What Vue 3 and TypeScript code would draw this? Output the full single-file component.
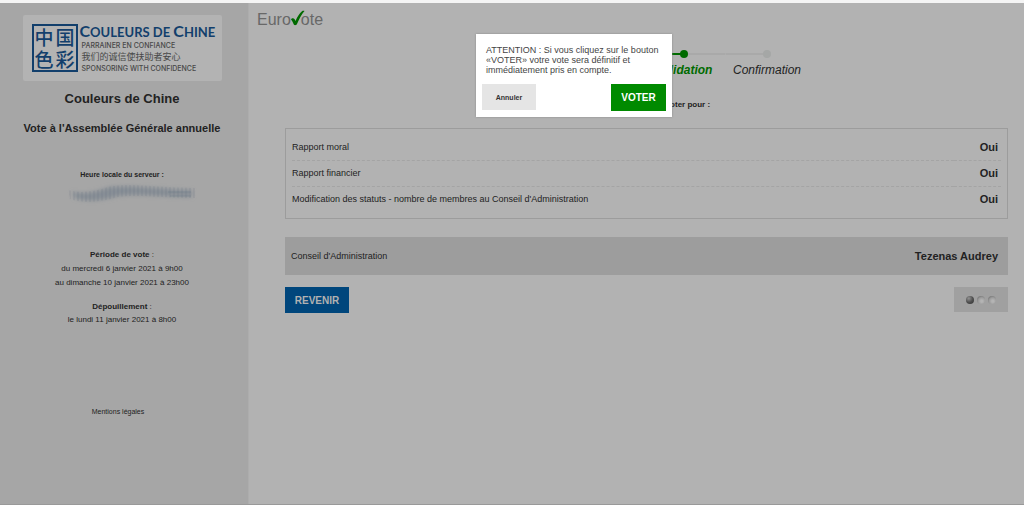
<script setup lang="ts">
interface Choice {
  label: string
  value: string
}

const resolutions: Choice[] = [
  { label: 'Rapport moral', value: 'Oui' },
  { label: 'Rapport financier', value: 'Oui' },
  { label: "Modification des statuts - nombre de membres au Conseil d'Administration", value: 'Oui' },
]

const steps = [
  { label: 'Validation', active: true },
  { label: 'Confirmation', active: false },
]

const stripes = Array.from({ length: 32 }, (_, i) => 8 + i * 4)
</script>

<template>
  <div class="page">
    <aside class="sidebar">
      <div class="logo">
        <div class="seal"><span>中</span><span>国</span><span>色</span><span>彩</span></div>
        <div class="logo-text">
          <div class="brand">C<small>OULEURS DE </small>C<small>HINE</small></div>
          <div class="tag">PARRAINER EN CONFIANCE</div>
          <div class="tag cn">我们的诚信使扶助者安心</div>
          <div class="tag">SPONSORING WITH CONFIDENCE</div>
        </div>
      </div>
      <h1>Couleurs de Chine</h1>
      <h2>Vote à l'Assemblée Générale annuelle</h2>
      <p class="clock-label">Heure locale du serveur :</p>
      <svg class="smear" width="140" height="24" viewBox="0 0 140 24" aria-hidden="true">
        <defs>
          <filter id="soft" x="-10%" y="-50%" width="120%" height="200%">
            <feGaussianBlur stdDeviation="2" />
          </filter>
          <filter id="fine" x="-10%" y="-50%" width="120%" height="200%">
            <feGaussianBlur stdDeviation="0.7" />
          </filter>
          <clipPath id="band">
            <path d="M6 8C20 12 34 9 46 5C68 0 95 6 134 6L134 16C104 16 72 12 56 15C40 20 22 22 8 17Z" />
          </clipPath>
        </defs>
        <path
          d="M10 10C26 13 34 9 48 5C72 3 96 7 130 8L130 15C104 15 74 11 56 14C40 19 24 20 13 16Z"
          fill="#7e8891"
          fill-opacity="0.8"
          filter="url(#soft)"
        />
        <g filter="url(#fine)">
          <g clip-path="url(#band)" stroke="#68747f" stroke-opacity="0.3">
            <line v-for="x in stripes" :key="x" :x1="x" :x2="x" y1="0" y2="24" />
          </g>
        </g>
        <path d="M106 10H129M108 14H129" stroke="#5e6d80" stroke-opacity="0.3" filter="url(#fine)" />
      </svg>
      <div class="dates">
        <p><b>Période de vote</b> :</p>
        <p>du mercredi 6 janvier 2021 à 9h00</p>
        <p>au dimanche 10 janvier 2021 à 23h00</p>
      </div>
      <div class="count">
        <p><b>Dépouillement</b> :</p>
        <p>le lundi 11 janvier 2021 à 8h00</p>
      </div>
      <a class="legal" href="#">Mentions légales</a>
    </aside>

    <main class="main">
      <div class="eurovote">
        <span>Euro</span>
        <svg width="15" height="16" viewBox="0 0 15 16" aria-label="V">
          <path d="M1 9.500C1.500 8 3.500 7.700 4.500 9L5.500 11C7.500 6.500 9.500 3 12 1.200C12.700 0.700 14 0.600 14.500 1C11.500 4 9 9.500 7 14C6.200 15.500 4.500 15.500 3.800 14.500C3 13 2.500 11 1 9.500Z" fill="#006a00" />
        </svg>
        <span>ote</span>
      </div>

      <div class="content">
        <ol class="steps">
          <li v-for="step in steps" :key="step.label" :class="{ active: step.active }">
            <i class="dot"></i>
            <span>{{ step.label }}</span>
          </li>
        </ol>
        <p class="intro">Vous allez voter pour :</p>

        <div class="panel">
          <table>
            <tbody>
              <tr v-for="item in resolutions" :key="item.label">
                <th scope="row">{{ item.label }}</th>
                <td>{{ item.value }}</td>
              </tr>
            </tbody>
          </table>
        </div>

        <div class="council">
          <span>Conseil d'Administration</span>
          <strong>Tezenas Audrey</strong>
        </div>

        <div class="actions">
          <button type="button" class="back">REVENIR</button>
          <div class="loader" role="status" aria-label="Chargement">
            <i class="ball on"></i><i class="ball"></i><i class="ball"></i>
          </div>
        </div>
      </div>
    </main>

    <div class="dialog" role="dialog" aria-modal="true">
      <p>ATTENTION : Si vous cliquez sur le bouton «VOTER» votre vote sera définitif et immédiatement pris en compte.</p>
      <div class="choices">
        <button type="button" class="cancel">Annuler</button>
        <button type="button" class="vote">VOTER</button>
      </div>
    </div>
  </div>
</template>

<style>
body {
  margin: 0;
  background: #b2b2b2;
}
</style>

<style scoped>
.page {
  position: relative;
  box-sizing: border-box;
  display: flex;
  min-height: 100vh;
  border-top: 3px solid #f4f4f4;
  border-bottom: 1px solid #999;
  background: #b2b2b2;
  color: #222;
  font: 8px/13px "Liberation Sans", Arial, sans-serif;
}
p, h1, h2 {
  margin: 0;
}
button {
  border: 0;
  padding: 0;
  font-family: inherit;
  font-weight: bold;
}

.sidebar {
  box-sizing: border-box;
  flex: 0 0 249px;
  display: flex;
  flex-direction: column;
  align-items: center;
  padding: 12px 4px 0 0;
  border-right: 1px solid #adadad;
  background: #a6a6a6;
  text-align: center;
}
.logo {
  box-sizing: border-box;
  display: flex;
  gap: 2px;
  width: 199px;
  height: 66px;
  padding: 9px 0 0 9px;
  border-radius: 2px;
  background: #b3b3b3;
  text-align: left;
  white-space: nowrap;
}
.seal {
  box-sizing: border-box;
  flex: none;
  display: grid;
  grid-template-columns: 21px 21px;
  grid-template-rows: 22px 22px;
  place-content: center;
  width: 46px;
  height: 48px;
  border: 2px solid #123f6c;
  color: #123f6c;
  font: 500 19px/21px "Noto Sans CJK SC", sans-serif;
  text-align: center;
}
.brand {
  height: 16px;
  color: #123f6c;
  font: bold 16px/14px Lato, sans-serif;
}
.brand small {
  font-size: 13px;
}
.tag {
  padding-left: 2px;
  color: #484848;
  font: 500 7px/11px Inter, sans-serif;
}
.tag.cn {
  font: 9px/12px "Noto Sans CJK SC", sans-serif;
}
h1 {
  margin-top: 9px;
  font-size: 13px;
  line-height: 18px;
}
h2 {
  margin-top: 12px;
  font-size: 11px;
  line-height: 16px;
}
.clock-label {
  margin-top: 32px;
  font-size: 7px;
  font-weight: bold;
}
.smear {
  margin: 1px 0 0 20px;
}
.dates {
  margin-top: 42px;
  line-height: 14px;
}
.count {
  margin-top: 10px;
}
.legal {
  margin: 79px 8px 0 0;
  color: #222;
  font-size: 7px;
  text-decoration: none;
}

.main {
  flex: 1;
  padding: 7px 16px 0 8px;
}
.eurovote {
  display: flex;
  height: 18px;
  color: #686868;
  font-size: 16px;
  line-height: 20px;
}
.eurovote svg {
  margin: 0 -4px 0 -1px;
}
.content {
  margin-left: 28px;
}
.steps {
  display: grid;
  grid-template-columns: 83px 83px;
  justify-content: center;
  margin: 22px 0 0;
  padding: 0 0 0 158px;
  list-style: none;
  font-size: 12px;
  font-style: italic;
  line-height: 16px;
  text-align: center;
}
.steps li {
  display: flex;
  flex-direction: column;
  align-items: center;
  gap: 4px;
  background: linear-gradient(#a9a9a9, #a9a9a9) left 3px / 50% 2px no-repeat;
}
.steps .active {
  color: #006a00;
  font-weight: bold;
  background-image: linear-gradient(#006a00, #006a00), linear-gradient(#a9a9a9, #a9a9a9);
  background-position: left 3px, right 3px;
}
.dot {
  width: 8px;
  height: 8px;
  border-radius: 50%;
  background: #a5a7a6;
}
.active .dot {
  background: #006a00;
}
.intro {
  margin: 20px 0 17px;
  padding-left: 42px;
  font-weight: bold;
  text-align: center;
}
.panel {
  padding: 6px;
  border: 1px solid #9c9c9c;
}
table {
  width: 100%;
  border-collapse: collapse;
}
th, td {
  height: 25px;
  padding: 0 3px 0 0;
  border-bottom: 1px dashed #a4a4a4;
}
tr:last-child th, tr:last-child td {
  border-bottom: 0;
}
th {
  font-size: 9px;
  font-weight: normal;
  text-align: left;
}
td {
  font-size: 11px;
  font-weight: bold;
  text-align: right;
}
.council {
  display: flex;
  align-items: center;
  justify-content: space-between;
  height: 38px;
  margin-top: 18px;
  padding: 0 10px 0 6px;
  background: #9d9d9d;
  font-size: 9px;
}
.council strong {
  font-size: 11px;
}
.actions {
  display: flex;
  justify-content: space-between;
  align-items: flex-start;
  margin-top: 12px;
}
.back {
  width: 64px;
  height: 26px;
  background: #00467c;
  color: #b2b2b2;
  font-size: 10px;
}
.loader {
  display: flex;
  align-items: center;
  justify-content: center;
  gap: 3px;
  width: 54px;
  height: 25px;
  background: #a0a0a0;
}
.ball {
  width: 8px;
  height: 8px;
  border-radius: 50%;
  background: radial-gradient(circle at 60% 65%, #b4b4b4 15%, #9c9c9c 50%, #7c7c7c 75%);
}
.ball.on {
  background: radial-gradient(circle at 35% 30%, #8c8c8c 5%, #505050 50%, #303030);
}

.dialog {
  position: absolute;
  top: 31px;
  left: 476px;
  box-sizing: border-box;
  width: 196px;
  padding: 11px 6px 6px;
  background: #fff;
  box-shadow: 0 0 2px #888;
}
.dialog p {
  padding: 0 0 0 4px;
  color: #444;
  font-size: 9px;
  line-height: 10px;
}
.choices {
  display: flex;
  justify-content: space-between;
  align-items: flex-start;
  margin-top: 9px;
}
.cancel {
  width: 54px;
  height: 26px;
  background: #e5e5e5;
  color: #333;
  font-size: 7px;
}
.vote {
  width: 55px;
  height: 27px;
  background: #008a00;
  color: #fff;
  font-size: 10px;
}
</style>
